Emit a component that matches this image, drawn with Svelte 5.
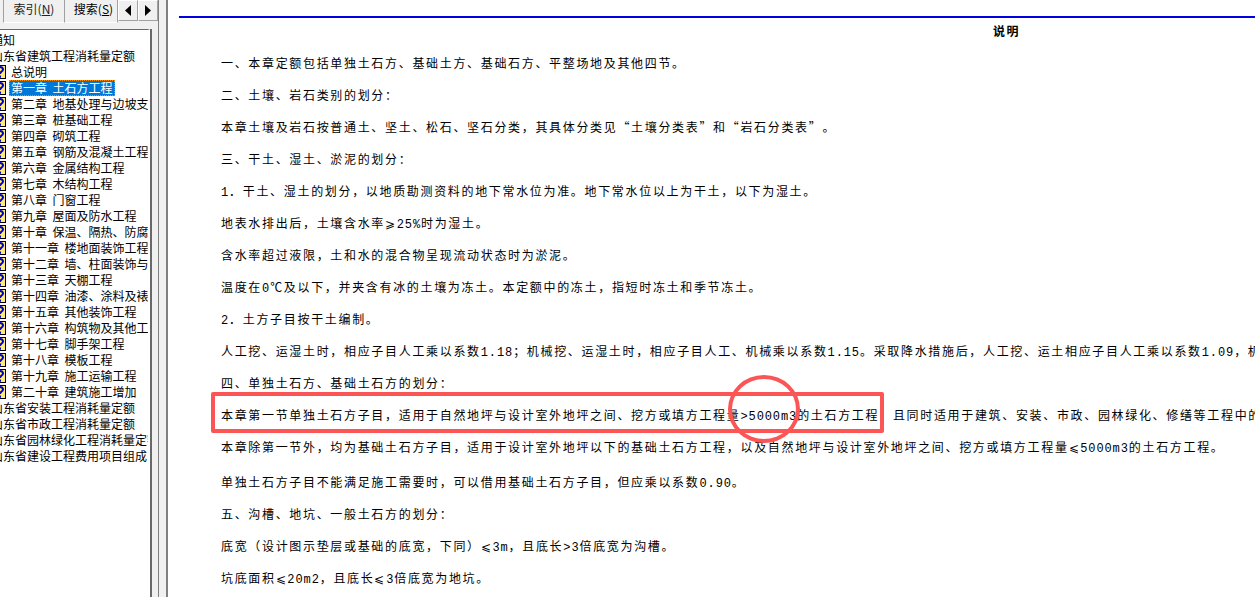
<script>
  const tree = [
    { label: '通知', level: 0 },
    { label: '山东省建筑工程消耗量定额', level: 0 },
    { label: '总说明', level: 1 },
    { label: '第一章  土石方工程', level: 1, selected: true },
    { label: '第二章  地基处理与边坡支护工程', level: 1 },
    { label: '第三章  桩基础工程', level: 1 },
    { label: '第四章  砌筑工程', level: 1 },
    { label: '第五章  钢筋及混凝土工程', level: 1 },
    { label: '第六章  金属结构工程', level: 1 },
    { label: '第七章  木结构工程', level: 1 },
    { label: '第八章  门窗工程', level: 1 },
    { label: '第九章  屋面及防水工程', level: 1 },
    { label: '第十章  保温、隔热、防腐工程', level: 1 },
    { label: '第十一章  楼地面装饰工程', level: 1 },
    { label: '第十二章  墙、柱面装饰与隔断', level: 1 },
    { label: '第十三章  天棚工程', level: 1 },
    { label: '第十四章  油漆、涂料及裱糊工程', level: 1 },
    { label: '第十五章  其他装饰工程', level: 1 },
    { label: '第十六章  构筑物及其他工程', level: 1 },
    { label: '第十七章  脚手架工程', level: 1 },
    { label: '第十八章  模板工程', level: 1 },
    { label: '第十九章  施工运输工程', level: 1 },
    { label: '第二十章  建筑施工增加', level: 1 },
    { label: '山东省安装工程消耗量定额', level: 0 },
    { label: '山东省市政工程消耗量定额', level: 0 },
    { label: '山东省园林绿化工程消耗量定额', level: 0 },
    { label: '山东省建设工程费用项目组成', level: 0 }
  ];

  const paragraphs = [
    '一、本章定额包括单独土石方、基础土方、基础石方、平整场地及其他四节。',
    '二、土壤、岩石类别的划分：',
    '本章土壤及岩石按普通土、坚土、松石、坚石分类，其具体分类见“土壤分类表”和“岩石分类表”。',
    '三、干土、湿土、淤泥的划分：',
    '1．干土、湿土的划分，以地质勘测资料的地下常水位为准。地下常水位以上为干土，以下为湿土。',
    '地表水排出后，土壤含水率⩾25%时为湿土。',
    '含水率超过液限，土和水的混合物呈现流动状态时为淤泥。',
    '温度在0℃及以下，并夹含有冰的土壤为冻土。本定额中的冻土，指短时冻土和季节冻土。',
    '2．土方子目按干土编制。',
    '人工挖、运湿土时，相应子目人工乘以系数1.18；机械挖、运湿土时，相应子目人工、机械乘以系数1.15。采取降水措施后，人工挖、运土相应子目人工乘以系数1.09，机械挖、运土不再乘系数。',
    '四、单独土石方、基础土石方的划分：',
    '本章第一节单独土石方子目，适用于自然地坪与设计室外地坪之间、挖方或填方工程量>5000m3的土石方工程；且同时适用于建筑、安装、市政、园林绿化、修缮等工程中的单独土石方工程。',
    '本章除第一节外，均为基础土石方子目，适用于设计室外地坪以下的基础土石方工程，以及自然地坪与设计室外地坪之间、挖方或填方工程量⩽5000m3的土石方工程。',
    '单独土石方子目不能满足施工需要时，可以借用基础土石方子目，但应乘以系数0.90。',
    '五、沟槽、地坑、一般土石方的划分：',
    '底宽（设计图示垫层或基础的底宽，下同）⩽3m，且底长>3倍底宽为沟槽。',
    '坑底面积⩽20m2，且底长⩽3倍底宽为地坑。'
  ];

  // latin runs are monospaced and the quotes take a full cell in the original
  const runs = (text) => text.split(/([\x21-\x7e]+|[“”])/);
</script>

<div class="app">
  <aside class="nav">
    <div class="tabs">
      <span class="tab first">索引(<u>N</u>)</span>
      <span class="tab">搜索(<u>S</u>)</span>
      <button class="arrow" aria-label="上一页"><svg width="7" height="11" viewBox="0 0 7 11"><path d="M6 0v11L0 5.500z" fill="#000"/></svg></button>
      <button class="arrow" aria-label="下一页"><svg width="7" height="11" viewBox="0 0 7 11"><path d="M0 0v11L6 5.500z" fill="#000"/></svg></button>
    </div>
    <div class="tree">
      {#each tree as item}
        <div class="row" class:book={item.level === 1}>
          {#if item.level === 1}
            <svg class="doc" width="13" height="14" viewBox="0 0 13 14">
              <rect x="0.500" y="0.500" width="12" height="13" fill="#ffe97a" stroke="#000"/>
              <path d="M4 4.500C4 1 10 1 10 4.500C10 6.500 7 6.500 7 9M7 10.500v2.200" fill="none" stroke="#0000c8" stroke-width="2"/>
            </svg>
          {/if}
          <span class="label" class:selected={item.selected}>{item.label}</span>
        </div>
      {/each}
    </div>
  </aside>

  <div class="splitter"></div>

  <main class="doc-pane">
    <hr class="rule" />
    <h1>说明</h1>
    {#each paragraphs as text, i}
      <p class:gap={i === 13}>
        {#each runs(text) as run, j}{#if j % 2 === 0}{run}{:else if run === '“'}<span class="quote open">{run}</span>{:else if run === '”'}<span class="quote">{run}</span>{:else}<span class="latin">{run}</span>{/if}{/each}
      </p>
    {/each}
    <div class="box"></div>
    <div class="ring"></div>
  </main>
</div>

<style>
  :global(body) { margin: 0; background: #fff; }

  .app {
    position: relative;
    display: flex;
    width: 1255px;
    height: 597px;
    overflow: hidden;
    background: #fff;
    color: #000;
    font-family: "Noto Sans CJK SC", "Liberation Sans", sans-serif;
    font-size: 12px;
  }

  .nav {
    flex: none;
    width: 150px;
    display: flex;
    flex-direction: column;
    background: #f0f0f0;
  }

  .tabs {
    flex: none;
    position: relative;
    z-index: 1;
    height: 29px;
    width: 158px;
    padding-left: 3px;
    box-sizing: border-box;
    display: flex;
    align-items: flex-start;
    background: #f0f0f0;
  }

  .tab {
    flex: none;
    height: 23px;
    line-height: 18px;
    width: 53px;
    padding-left: 5px;
    box-sizing: border-box;
    text-align: center;
    white-space: nowrap;
    border-right: 1px solid #a0a0a0;
    border-bottom: 1px solid #fff;
  }

  .tab.first {
    width: 62px;
    padding-left: 0;
    border-left: 1px solid #a0a0a0;
    color: #222;
  }

  .arrow {
    flex: none;
    width: 20px;
    height: 21px;
    padding: 0;
    background: #f0f0f0;
    border: 1px solid #a0a0a0;
    border-left-color: #fff;
    border-top-color: #fff;
    display: flex;
    align-items: center;
    justify-content: center;
  }

  .tree {
    flex: 1;
    padding-top: 2px;
    background: #fff;
    border-top: 1px solid #696969;
    border-right: 2px solid #fff;
    overflow: hidden;
  }

  .row {
    height: 16px;
    line-height: 16px;
    white-space: pre;
    margin-left: -9px;
    padding-left: 0;
    display: flex;
    align-items: center;
  }

  .row.book { margin-left: -7px; }

  .doc { flex: none; margin-right: 3px; }

  .label { line-height: 16px; }

  .book .label { padding: 0 3px 0 2px; }

  .label.selected {
    background: #0078d7;
    color: #fff;
    outline: 1px dotted #ff8a00;
    outline-offset: -1px;
  }

  .splitter {
    flex: none;
    width: 18px;
    box-sizing: border-box;
    background: linear-gradient(90deg, #696969 0 2px, #f0f0f0 2px 8px, #808080 8px 9px, #f0f0f0 9px 16px, #808080 16px 18px);
  }

  .doc-pane {
    flex: 1;
    min-width: 0;
    position: relative;
    padding-left: 53px;
    white-space: nowrap;
    letter-spacing: 1.670px;
    overflow: hidden;
  }

  .rule {
    margin: 16px 0 0 -42px;
    height: 2px;
    border: 0;
    background: #0000e0;
  }

  h1 {
    margin: 4px 0 0;
    font-size: 12px;
    line-height: 18px;
    font-weight: 700;
    letter-spacing: 1.500px;
    padding-left: 772px;
    height: 18px;
  }

  p {
    margin: 14px 0 0;
    height: 18px;
    line-height: 18px;
  }

  p.gap { margin-top: 17px; }

  .latin {
    font-family: "Liberation Mono", monospace;
    letter-spacing: 0.900px;
  }

  .quote {
    display: inline-block;
    width: 13.670px;
    letter-spacing: 0;
    text-align: left;
  }

  .quote.open { text-align: right; padding-right: 2px; width: 11.670px; }

  .box {
    position: absolute;
    left: 43px;
    top: 392px;
    width: 673px;
    height: 41px;
    border: 4px solid #fb5555;
    border-radius: 2px;
    box-sizing: border-box;
  }

  .ring {
    position: absolute;
    left: 560px;
    top: 375px;
    width: 72px;
    height: 68px;
    border: 4px solid #fb5555;
    border-radius: 50%;
    box-sizing: border-box;
  }
</style>
